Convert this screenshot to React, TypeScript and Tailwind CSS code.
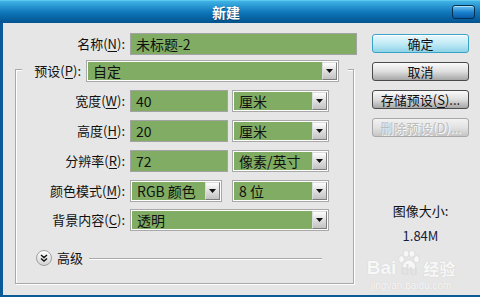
import React from "react";

const FONT = "font-['Noto_Sans_CJK_SC','Noto_Sans',sans-serif]";

function Lbl({ t, k, className }: { t: string; k: string; className: string }) {
    return (
        <span className={"text-right text-[13px] leading-[18px] text-[#111] " + className}>
            {t}(<span className="underline underline-offset-2">{k}</span>):
        </span>
    );
}

function Arrow() {
    return (
        <div className="w-[15px] h-full bg-linear-to-b from-[#fdfdfd] to-[#c2c2c2] border border-[#7d7d7d] border-t-[#dcdcdc] border-l-[#dcdcdc] flex items-center justify-center">
            <svg width="7" height="4" viewBox="0 0 7 4">
                <path d="M0 0h7L3.5 4z" fill="#111" />
            </svg>
        </div>
    );
}

function Select({ value, w }: { value: string; w: string }) {
    return (
        <div className={"h-[22px] border border-[#a8a8a8] bg-white p-[1px] flex " + w}>
            <div className="flex-1 bg-[#80ad63] flex items-center pl-[5px] text-[14px] text-[#111]">
                {value}
            </div>
            <Arrow />
        </div>
    );
}

function Field({ value, w }: { value: string; w: string }) {
    return (
        <div className={"h-[22px] border border-[#a3a3a3] bg-[#80ad63] flex items-center pl-[5px] text-[14px] text-[#111] " + w}>
            {value}
        </div>
    );
}

function Row({ children, className }: { children: React.ReactNode; className: string }) {
    return <div className={"flex items-center h-[22px] " + className}>{children}</div>;
}

function Paw() {
    return (
        <svg width="26" height="20" viewBox="0 0 30 24">
            <g fill="#ffffff" fillOpacity="0.9" stroke="#d0d0d0" strokeWidth="0.8">
                <ellipse cx="6" cy="11" rx="3.5" ry="4.2" />
                <ellipse cx="11.5" cy="4.5" rx="3.5" ry="4.2" />
                <ellipse cx="18.5" cy="4.5" rx="3.5" ry="4.2" />
                <ellipse cx="24" cy="11" rx="3.5" ry="4.2" />
                <path d="M15 12c4 0 8 5 8 8.5 0 3-3 3.5-8 2.2C10 24 7 23.5 7 20.5 7 17 11 12 15 12z" />
            </g>
        </svg>
    );
}

export default function App() {
    return (
        <div className={"w-[480px] h-[297px] overflow-hidden flex flex-col bg-[#0a5a98] " + FONT}>
            {/* title bar */}
            <div className="h-[23px] flex items-center bg-linear-to-b from-[#3fb4e6] via-[#0f78bb] to-[#04538f] border-t border-[#5cc8ee]">
                <div className="flex-1 text-center text-white font-bold text-[14px] leading-[20px] [text-shadow:0_1px_1px_#033a66]">
                    新建
                </div>
                <div className="w-[23px] h-[14px] mr-[5px] rounded-[3px] border border-[#062c4e] bg-linear-to-b from-[#6cc4f2] via-[#1b84d0] to-[#0a5aa8] shadow-[inset_0_1px_0_#a8e2fa]" />
            </div>

            {/* body */}
            <div className="flex-1 ml-[3px] mb-[2px] bg-[#e6e6e6] relative flex">
                {/* left column */}
                <div className="w-[369px] flex flex-col">
                    <Row className="mt-[10px]">
                        <Lbl t="名称" k="N" className="w-[122px]" />
                        <Field value="未标题-2" w="ml-[5px] w-[227px] h-[21px]" />
                    </Row>

                    <div className="mt-[14px] ml-[12px] w-[339px] h-[215px] border border-[#a9a9a9] shadow-[1px_1px_0_#ffffff,inset_1px_1px_0_#ffffff] flex flex-col">
                        {/* preset row sits on the top border */}
                        <div className="-mt-[10px] ml-[6px] w-[326px] h-[22px] bg-[#e6e6e6] flex items-center">
                            <Lbl t="预设" k="P" className="w-[59px]" />
                            <Select value="自定" w="ml-[5px] w-[253px]" />
                        </div>

                        <Row className="mt-[8px]">
                            <Lbl t="宽度" k="W" className="w-[109px]" />
                            <Field value="40" w="ml-[5px] w-[98px]" />
                            <Select value="厘米" w="ml-[4px] w-[97px]" />
                        </Row>
                        <Row className="mt-[8px]">
                            <Lbl t="高度" k="H" className="w-[109px]" />
                            <Field value="20" w="ml-[5px] w-[98px]" />
                            <Select value="厘米" w="ml-[4px] w-[97px]" />
                        </Row>
                        <Row className="mt-[8px]">
                            <Lbl t="分辨率" k="R" className="w-[109px]" />
                            <Field value="72" w="ml-[5px] w-[98px]" />
                            <Select value="像素/英寸" w="ml-[4px] w-[97px]" />
                        </Row>
                        <Row className="mt-[8px]">
                            <Lbl t="颜色模式" k="M" className="w-[109px]" />
                            <Select value="RGB 颜色" w="ml-[5px] w-[92px]" />
                            <Select value="8 位" w="ml-[10px] w-[97px]" />
                        </Row>
                        <Row className="mt-[7px]">
                            <Lbl t="背景内容" k="C" className="w-[109px]" />
                            <Select value="透明" w="ml-[5px] w-[199px]" />
                        </Row>

                        <div className="mt-[19px] ml-[20px] flex items-center h-[16px]">
                            <div className="w-[16px] h-[16px] rounded-full border border-[#a0a0a0] bg-linear-to-b from-[#ffffff] to-[#d2d2d2] flex items-center justify-center">
                                <svg width="8" height="8" viewBox="0 0 8 8">
                                    <path d="M1 1l3 2.5L7 1M1 4.5L4 7l3-2.5" fill="none" stroke="#111" strokeWidth="1.4" />
                                </svg>
                            </div>
                            <span className="ml-[5px] text-[13px] leading-[18px] text-[#111]">高级</span>
                            <div className="ml-[6px] w-[233px] h-px bg-[#a9a9a9] shadow-[0_1px_0_#ffffff]" />
                        </div>
                    </div>
                </div>

                {/* right column */}
                <div className="w-[97px] flex flex-col">
                    <div className="mt-[11px] flex flex-col gap-[9px] text-[13px] text-[#111]">
                        <div className="h-[19px] rounded-[3px] border border-[#3aa2c4] bg-linear-to-b from-[#e8f8fd] via-[#c2ebf6] to-[#8ed3e8] shadow-[inset_0_1px_0_#ffffff] flex items-center justify-center">
                            确定
                        </div>
                        <div className="h-[19px] rounded-[3px] border border-[#4a4a4a] bg-linear-to-b from-[#fbfbfb] via-[#dedede] to-[#a6a6a6] flex items-center justify-center">
                            取消
                        </div>
                        <div className="h-[19px] rounded-[3px] border border-[#4a4a4a] bg-linear-to-b from-[#fbfbfb] via-[#dedede] to-[#a6a6a6] flex items-center justify-center">
                            存储预设(<span className="underline underline-offset-2">S</span>)...
                        </div>
                        <div className="h-[19px] rounded-[3px] border border-[#a8a8a8] bg-linear-to-b from-[#f2f2f2] via-[#e2e2e2] to-[#c6c6c6] flex items-center justify-center text-[#bdbdbd] [text-shadow:1px_1px_0_#f8f8f8]">
                            删除预设(D)...
                        </div>
                    </div>
                    <div className="mt-[65px] text-center text-[13px] leading-[18px] text-[#111]">图像大小:</div>
                    <div className="mt-[7px] text-center text-[13px] leading-[18px] text-[#1a1a3a]">1.84M</div>
                </div>

                {/* watermark overlay */}
                <div className="absolute left-[358px] top-[221px] w-[100px] flex flex-col items-center whitespace-nowrap opacity-75 text-white [text-shadow:0_0_1px_#bdbdbd]">
                    <div className="flex items-end h-[34px]">
                        <span className="font-['Liberation_Sans',sans-serif] font-bold text-[19px] leading-[20px]">Bai</span>
                        <div className="flex flex-col items-center w-[26px]">
                            <Paw />
                            <span className="-mt-[8px] font-['Liberation_Sans',sans-serif] font-bold text-[14px] leading-[16px] text-[#dcdcdc] [text-shadow:none]">du</span>
                        </div>
                        <span className="ml-[1px] font-bold text-[16px] leading-[20px]">经验</span>
                    </div>
                    <span className="font-['Liberation_Sans',sans-serif] text-[10px] leading-[12px] mt-[2px]">jingyan.baidu.com</span>
                </div>
            </div>
        </div>
    );
}
